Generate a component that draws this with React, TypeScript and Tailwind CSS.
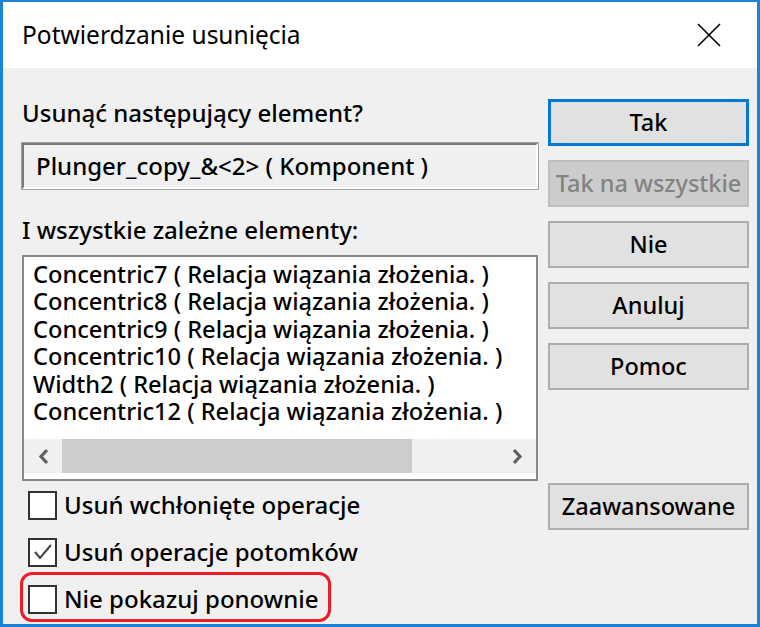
import React from 'react'

const font = { fontFamily: '"Noto Sans", "Open Sans", sans-serif' }

const items = [
  'Concentric7 ( Relacja wiązania złożenia. )',
  'Concentric8 ( Relacja wiązania złożenia. )',
  'Concentric9 ( Relacja wiązania złożenia. )',
  'Concentric10 ( Relacja wiązania złożenia. )',
  'Width2 ( Relacja wiązania złożenia. )',
  'Concentric12 ( Relacja wiązania złożenia. )',
]

function Button({ label, primary, disabled }: { label: string; primary?: boolean; disabled?: boolean }) {
  let cls = 'h-[47px] w-full flex items-center justify-center text-[23.5px] font-medium '
  if (primary) cls += 'border-[3px] border-[#0078d7] bg-[#e1e1e1] text-black'
  else if (disabled) cls += 'border-2 border-[#bfbfbf] bg-[#cccccc] text-[#838383]'
  else cls += 'border-2 border-[#adadad] bg-[#e1e1e1] text-black'
  return <div className={cls}>{label}</div>
}

function Checkbox({ label, checked }: { label: string; checked?: boolean }) {
  return (
    <div className="flex items-center h-[30px]">
      <div className="w-[29px] h-[29px] border-2 border-[#333333] bg-white flex items-center justify-center">
        {checked && (
          <svg width="22" height="22" viewBox="0 0 22 22">
            <polyline points="3,11 8,17 19,4" fill="none" stroke="#444" strokeWidth="2" />
          </svg>
        )}
      </div>
      <span className="ml-[7px] text-[24px] font-medium text-black">{label}</span>
    </div>
  )
}

export default function App() {
  return (
    <div className="w-[760px] h-[627px] border-x-[3px] border-b-[3px] border-t-2 border-[#1883d7] bg-[#f0f0f0] flex flex-col" style={font}>
      <div className="h-[66px] bg-white flex items-center justify-between pl-[19px] pr-[36px]">
        <span className="text-[24.5px] text-black">Potwierdzanie usunięcia</span>
        <svg width="24" height="24" viewBox="0 0 24 24">
          <path d="M1 1 L23 23 M23 1 L1 23" stroke="#000" strokeWidth="1.6" fill="none" />
        </svg>
      </div>

      <div className="flex pl-[19px] pt-[31px]">
        <div className="w-[516px] flex flex-col">
          <div className="h-[27px] leading-[27px] text-[24px] font-medium text-black">Usunąć następujący element?</div>
          <div className="mt-[17px] h-[46px] border-2 border-t-[#7a7a7a] border-l-[#7a7a7a] border-r-white border-b-white outline outline-1 outline-[#a0a0a0] bg-[#f0f0f0] flex items-center pl-[12px] text-[24px] font-medium text-black whitespace-nowrap">
            Plunger_copy_&amp;&lt;2&gt; ( Komponent )
          </div>
          <div className="mt-[27px] h-[27px] leading-[27px] text-[24px] font-medium text-black">I wszystkie zależne elementy:</div>
          <div className="mt-[12px] h-[226px] border-2 border-[#828790] bg-white flex flex-col">
            <div className="flex-1 pt-[4px] pl-[9px]">
              {items.map((t) => (
                <div key={t} className="h-[27.4px] leading-[27px] text-[23.6px] font-medium text-black whitespace-nowrap">
                  {t}
                </div>
              ))}
            </div>
            <div className="h-[34px] mb-[6px] bg-[#f0f0f0] flex items-center">
              <div className="w-[38px] flex items-center justify-center">
                <svg width="13" height="17" viewBox="0 0 13 17">
                  <polyline points="10,2 4,8.5 10,15" fill="none" stroke="#606060" strokeWidth="3.2" />
                </svg>
              </div>
              <div className="w-[350px] h-full bg-[#cdcdcd]" />
              <div className="flex-1" />
              <div className="w-[38px] flex items-center justify-center">
                <svg width="13" height="17" viewBox="0 0 13 17">
                  <polyline points="3,2 9,8.5 3,15" fill="none" stroke="#606060" strokeWidth="3.2" />
                </svg>
              </div>
            </div>
          </div>
          <div className="mt-[9px] pl-[6px] flex flex-col gap-[17px]">
            <Checkbox label="Usuń wchłonięte operacje" />
            <Checkbox label="Usuń operacje potomków" checked />
            <div className="relative">
              <Checkbox label="Nie pokazuj ponownie" />
              <div className="absolute left-[-8px] top-[-12px] w-[311px] h-[50px] border-[3px] border-[#ee1c24] rounded-[12px]" />
            </div>
          </div>
        </div>

        <div className="ml-[10px] w-[201px] flex flex-col">
          <div className="flex flex-col gap-[14px]">
            <Button label="Tak" primary />
            <Button label="Tak na wszystkie" disabled />
            <Button label="Nie" />
            <Button label="Anuluj" />
            <Button label="Pomoc" />
          </div>
          <div className="mt-[93px]">
            <Button label="Zaawansowane" />
          </div>
        </div>
      </div>
    </div>
  )
}
